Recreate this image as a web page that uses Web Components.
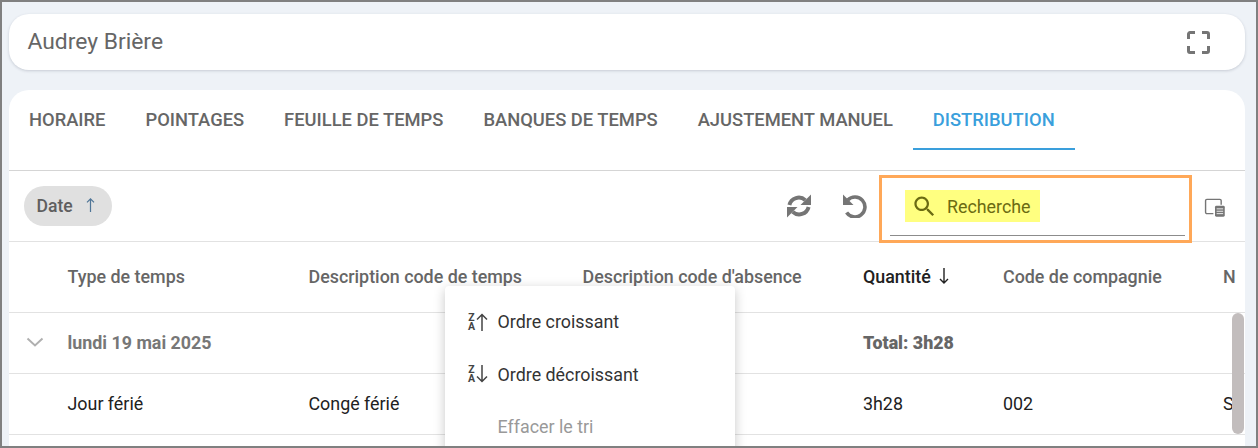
<!DOCTYPE html>
<html lang="fr">
<head>
<meta charset="utf-8">
<title>Distribution</title>
<style>
  html, body { margin: 0; height: 100%; }
  body { font-family: Roboto, "Liberation Sans", sans-serif; overflow: hidden; }
</style>
</head>
<body>
<app-frame>
  <name-card name="Audrey Brière"></name-card>
  <main-panel>
    <tab-bar active="DISTRIBUTION" items='["HORAIRE","POINTAGES","FEUILLE DE TEMPS","BANQUES DE TEMPS","AJUSTEMENT MANUEL","DISTRIBUTION"]'></tab-bar>
    <grid-toolbar></grid-toolbar>
    <data-table></data-table>
    <sort-menu></sort-menu>
  </main-panel>
</app-frame>

<script>
const ICONS = {
  sync: '<path d="M2.400 11A9.600 9.600 0 0 1 18.300 6.200" fill="none" stroke="currentColor" stroke-width="3.900"/><path d="M24 .5V11H13.500z" fill="currentColor"/><path d="M21.600 13A9.600 9.600 0 0 1 5.700 17.800" fill="none" stroke="currentColor" stroke-width="3.900"/><path d="M0 23.500V13h10.500z" fill="currentColor"/>',
  undo: '<path d="M4.800 6A10 10 0 1 1 3.600 18.500" fill="none" stroke="currentColor" stroke-width="3.600"/><path d="M0 .5V11h10.500z" fill="currentColor"/>',
  search: '<path fill="currentColor" d="M15.500 14h-.79l-.28-.27C15.410 12.590 16 11.110 16 9.500 16 5.910 13.090 3 9.500 3S3 5.910 3 9.500 5.910 16 9.500 16c1.610 0 3.090-.59 4.230-1.570l.27.28v.79l5 4.990L20.490 19l-4.990-5zm-6 0C7.010 14 5 11.990 5 9.500S7.010 5 9.500 5 14 7.010 14 9.500 11.990 14 9.500 14z"/>',
  panel: '<path d="M10.500 17.200H4.500A1.200 1.200 0 0 1 3.300 16V5.200A1.200 1.200 0 0 1 4.500 4H16.500A1.200 1.200 0 0 1 17.700 5.200V9" fill="none" stroke="currentColor" stroke-width="1.300"/><rect x="12" y="10" width="9" height="10" rx="1.200" fill="currentColor"/><path d="M13.500 12.800h6M13.500 15h6M13.500 17.200h6" stroke="#fff" stroke-width=".8"/>',
  chevron: '<path d="M4.500 8.500l7.500 7 7.500-7" fill="none" stroke="currentColor" stroke-width="2"/>'
};
const icon = (name, size) => `<svg viewBox="0 0 24 24" width="${size}" height="${size}" aria-hidden="true">${ICONS[name]}</svg>`;
const arrow = (dir, w = 1.4) => `<svg class="arrow" viewBox="0 0 10 16" width="10" height="16" aria-hidden="true"><path d="${dir === 'up' ? 'M5 16V1M1 5l4-4 4 4' : 'M5 0v15M1 11l4 4 4-4'}" fill="none" stroke="currentColor" stroke-width="${w}"/></svg>`;

class AppFrame extends HTMLElement {
  constructor() {
    super();
    this.attachShadow({mode: "open"});
    this.shadowRoot.innerHTML = `
    <style>
      :host {
        display: flex; flex-direction: column; gap: 20px;
        box-sizing: border-box; width: 1258px; height: 448px;
        padding: 12px 11px 0 7px;
        border: 2px solid #808080;
        background: #eef2f7; overflow: hidden;
      }
    </style>
    <slot></slot>`;
  }
}

class NameCard extends HTMLElement {
  constructor() {
    super();
    this.attachShadow({mode: "open"});
  }
  connectedCallback() {
    this.shadowRoot.innerHTML = `
    <style>
      :host {
        display: flex; align-items: center; justify-content: space-between;
        flex: none; height: 56px; padding: 0 35px 0 18.500px;
        background: #fff; border-radius: 20px;
        box-shadow: 0 1px 3px rgba(60,70,90,.22);
        color: #666; font-size: 22.85px;
      }
      span { padding-bottom: 2px; }
      svg { display: block; color: #757575; }
    </style>
    <span>${this.getAttribute('name')}</span>
    <svg viewBox="0 0 23 23" width="23" height="23" aria-hidden="true"><path d="M1.500 8V3A1.500 1.500 0 0 1 3 1.500H8M15 1.500h5A1.500 1.500 0 0 1 21.500 3V8M21.500 15v5A1.500 1.500 0 0 1 20 21.500H15M8 21.500H3A1.500 1.500 0 0 1 1.500 20V15" fill="none" stroke="currentColor" stroke-width="3"/></svg>`;
  }
}

class MainPanel extends HTMLElement {
  constructor() {
    super();
    this.attachShadow({mode: "open"});
    this.shadowRoot.innerHTML = `
    <style>
      :host {
        display: flex; flex-direction: column; position: relative;
        flex: 1; min-height: 0; background: #fff;
        border-radius: 20px 20px 0 0; overflow: hidden;
      }
    </style>
    <slot></slot>`;
  }
}

class TabBar extends HTMLElement {
  constructor() {
    super();
    this.attachShadow({mode: "open"});
  }
  connectedCallback() {
    const active = this.getAttribute('active');
    const items = JSON.parse(this.getAttribute('items'));
    this.shadowRoot.innerHTML = `
    <style>
      :host {
        display: flex; flex: none; height: 81px; box-sizing: border-box;
        border-bottom: 1px solid #d5d5d5; align-items: flex-start;
      }
      .tab {
        box-sizing: border-box; height: 60px; padding: 0 20px 2px;
        display: flex; align-items: center;
        font-size: 18.35px; font-weight: 500; color: #666;
        white-space: nowrap;
      }
      .tab.on { color: #3a9fdc; border-bottom: 2px solid #3a9fdc; padding-bottom: 0; }
    </style>
    ${items.map(t => `<div class="tab ${t === active ? 'on' : ''}">${t}</div>`).join('\n')}`;
  }
}

class GridToolbar extends HTMLElement {
  constructor() {
    super();
    this.attachShadow({mode: "open"});
    this.shadowRoot.innerHTML = `
    <style>
      :host {
        display: flex; align-items: center; flex: none; height: 71px;
        box-sizing: border-box; padding: 0 17px 0 15px;
        border-bottom: 1px solid #e2e2e2; color: #757575;
      }
      .chip {
        display: flex; align-items: center; gap: 13px;
        height: 40px; width: 88px; box-sizing: border-box; padding: 0 0 0 12.500px; border-radius: 20px;
        background: #e0e0e0; color: #5f5f5f;
        font-size: 17.6px; font-weight: 500;
      }
      .chip .arrow { color: #4f7597; margin-top: -2px; width: 9px; height: 14px; }
      .tools { display: flex; align-items: center; gap: 32px; margin-left: auto; }
      svg { display: block; }
      .search {
        box-sizing: border-box; width: 313px; height: 68px; margin: 4px 10px 0 12px;
        padding: 12px 4px 0 8px; border: 3px solid #ffa858;
        display: flex; flex-direction: column; align-self: flex-start;
      }
      .field {
        flex: none; height: 46px; box-sizing: border-box;
        border-bottom: 1px solid #8c8c8c; padding-left: 15px;
      }
      .mark {
        display: inline-flex; align-items: center; gap: 9.400px;
        height: 32px; padding: 0 9px 0 5.600px; background: #ffff80;
        color: #6b6b12; font-size: 17.85px;
      }
      .panel { margin-top: 3px; }
    </style>
    <div class="chip">Date ${arrow('up')}</div>
    <div class="tools">
      ${icon('sync', 24)}
      ${icon('undo', 24)}
    </div>
    <div class="search">
      <div class="field"><div class="mark">${icon('search', 27)}Recherche</div></div>
    </div>
    <span class="panel">${icon('panel', 26)}</span>`;
  }
}

class DataTable extends HTMLElement {
  constructor() {
    super();
    this.attachShadow({mode: "open"});
    this.shadowRoot.innerHTML = `
    <style>
      :host { display: block; flex: 1; position: relative; overflow: hidden; font-size: 17.87px; color: #212121; }
      .row {
        display: grid; height: 61px; box-sizing: border-box; padding-bottom: 2px;
        grid-template-columns: 58.500px 241px 274px 280.500px 140px 220px 100px;
        align-items: center; border-bottom: 1px solid #e2e2e2;
        white-space: nowrap; width: 1314px;
      }
      .head { height: 71px; font-weight: 500; color: #666; }
      .head b { font-weight: 500; color: #212121; display: flex; align-items: center; gap: 8px; }
      .group { font-weight: 700; color: #777; }
      .group b { color: #666; }
      .chev { display: flex; padding-left: 13.500px; color: #b0b0b0; }
      svg { display: block; }
      .thumb {
        position: absolute; right: 1px; top: 71px; width: 12px; height: 121px;
        border-radius: 6px; background: #c2bdbd;
      }
    </style>
    <div class="row head">
      <span></span><span>Type de temps</span><span>Description code de temps</span>
      <span>Description code d'absence</span><b>Quantité ${arrow('down')}</b>
      <span>Code de compagnie</span><span>N</span>
    </div>
    <div class="row group">
      <span class="chev">${icon('chevron', 24)}</span><span>lundi 19 mai 2025</span><span></span><span></span><b>Total: 3h28</b>
    </div>
    <div class="row">
      <span></span><span>Jour férié</span><span>Congé férié</span><span></span><span>3h28</span><span>002</span><span>S</span>
    </div>
    <div class="thumb"></div>`;
  }
}

class SortMenu extends HTMLElement {
  constructor() {
    super();
    this.attachShadow({mode: "open"});
    this.shadowRoot.innerHTML = `
    <style>
      :host {
        position: absolute; left: 436px; top: 196px; width: 290px; height: 180px;
        background: #fff; border-radius: 4px 4px 0 0; padding-top: 9.500px; box-sizing: border-box;
        box-shadow: 0 3px 12px rgba(0,0,0,.22);
        font-size: 17.87px; color: #333;
      }
      .item { display: flex; align-items: center; height: 52.500px; padding-left: 22px; gap: 9.500px; }
      .item.off { color: #999; padding-left: 52.500px; }
      .az { display: flex; align-items: center; width: 21px; color: #444; }
      .az i { display: block; width: 9px; white-space: pre-line; text-align: center; font: 700 10.500px/9px Roboto, sans-serif; }
      .az svg { display: block; margin-left: 0; }
    </style>
    <div class="item"><span class="az"><i>Z
A</i><svg viewBox="0 0 12 18" width="12" height="18" aria-hidden="true"><path d="M6 18V1.500M1 6.500l5-5 5 5" fill="none" stroke="currentColor" stroke-width="1.500"/></svg></span>Ordre croissant</div>
    <div class="item"><span class="az"><i>Z
A</i><svg viewBox="0 0 12 18" width="12" height="18" aria-hidden="true"><path d="M6 0v16.500M1 11.500l5 5 5-5" fill="none" stroke="currentColor" stroke-width="1.500"/></svg></span>Ordre décroissant</div>
    <div class="item off">Effacer le tri</div>`;
  }
}

customElements.define('app-frame', AppFrame);
customElements.define('name-card', NameCard);
customElements.define('main-panel', MainPanel);
customElements.define('tab-bar', TabBar);
customElements.define('grid-toolbar', GridToolbar);
customElements.define('data-table', DataTable);
customElements.define('sort-menu', SortMenu);
</script>
</body>
</html>
